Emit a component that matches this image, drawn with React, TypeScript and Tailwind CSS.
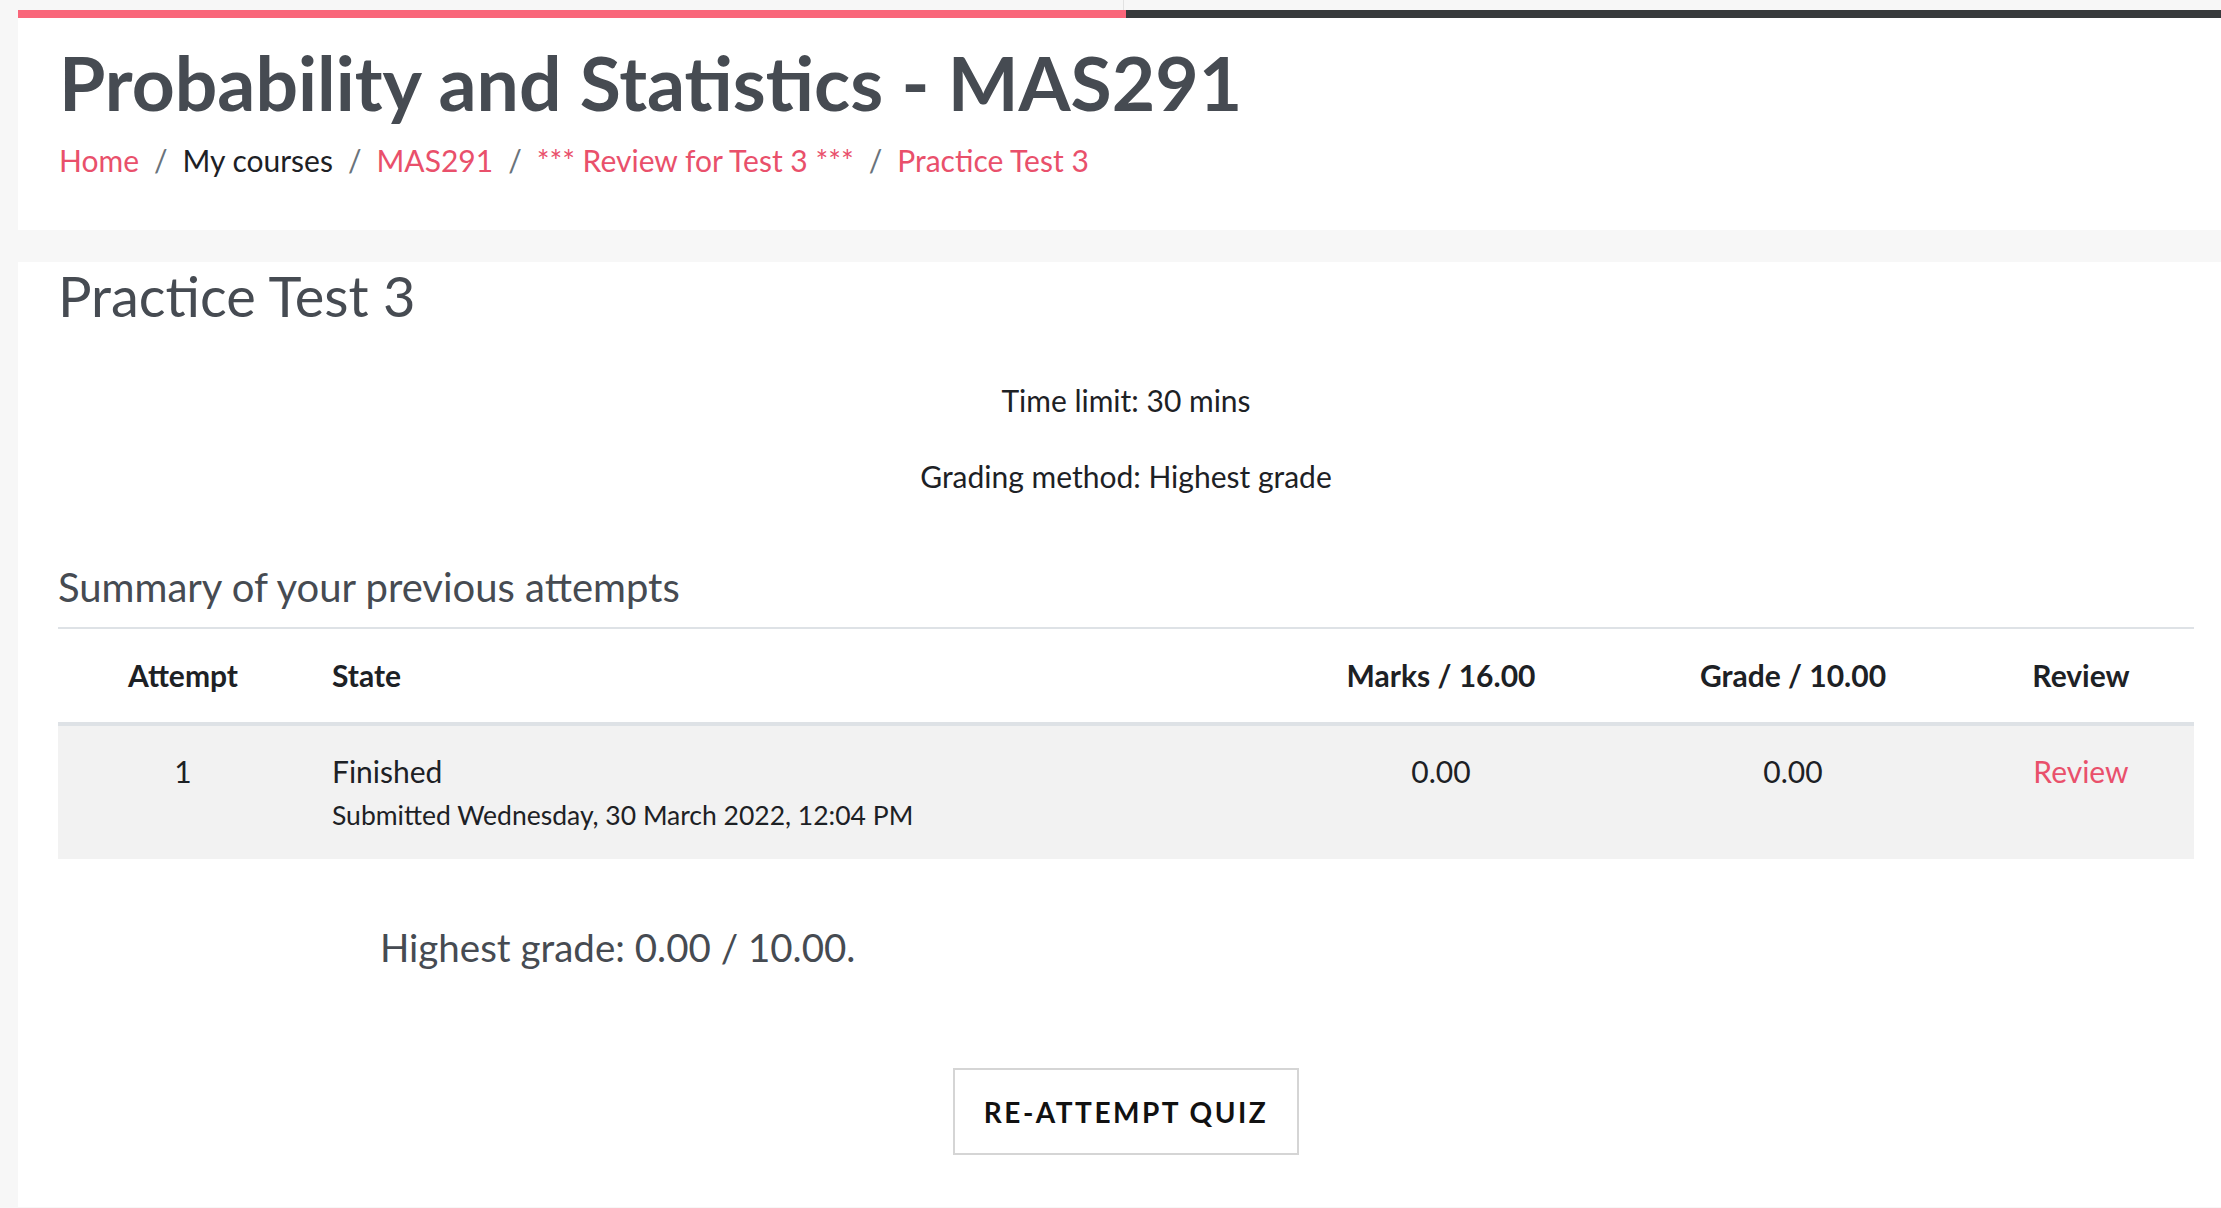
const crumbs = [
  { label: 'Home', link: true },
  { label: 'My courses', link: false },
  { label: 'MAS291', link: true },
  { label: '*** Review for Test 3 ***', link: true },
  { label: 'Practice Test 3', link: true },
]

const App = () => {
  return (
    <div className="min-h-screen bg-[#f7f7f7] pl-[18px] font-['Lato',sans-serif] text-[#1d2125]">
      <div className="flex h-[10px]">
        <div className="w-[1106px] border-r border-[#e2e2e2]" />
      </div>

      <header className="bg-white pb-[47px]">
        <div className="flex h-[8px]">
          <div className="w-[1108px] bg-[#f9667a]" />
          <div className="flex-1 bg-[#373a3c]" />
        </div>
        <h1 className="mt-[19px] pl-[41px] text-[75px] font-bold leading-[90px] text-[#464b52]">
          Probability and Statistics - MAS291
        </h1>
        <nav className="mt-[11px] pl-[41px] text-[30px] leading-[45px]">
          <ol className="flex">
            {crumbs.map((c, i) => (
              <li key={c.label} className="flex">
                {i > 0 && <span className="px-[15px] text-[#6a737b]">/</span>}
                <span className={c.link ? 'text-[#e9506b]' : 'text-[#1d2125]'}>{c.label}</span>
              </li>
            ))}
          </ol>
        </nav>
      </header>

      <main className="mt-[33px] min-h-[945px] bg-white pl-[40px] pr-[27px] pb-[40px]">
        <h2 className="-mt-[1px] text-[56px] leading-[68px] text-[#464b52]">Practice Test 3</h2>

        <div className="text-center text-[30px] leading-[45px]">
          <p className="mt-[48px]">Time limit: 30 mins</p>
          <p className="mt-[31px]">Grading method: Highest grade</p>
        </div>

        <h3 className="mt-[66px] text-[40px] leading-[45px] text-[#464b52]">
          Summary of your previous attempts
        </h3>

        <table className="mt-[17px] w-full table-fixed border-t-2 border-[#dee2e6] text-[30px] leading-[45px]">
          <thead>
            <tr className="border-b-4 border-[#dee2e6]">
              <th className="w-[250px] px-[24px] py-[24px] text-center font-bold">Attempt</th>
              <th className="w-[956px] px-[24px] py-[24px] text-left font-bold">State</th>
              <th className="w-[354px] px-[24px] py-[24px] text-center font-bold">Marks / 16.00</th>
              <th className="w-[350px] px-[24px] py-[24px] text-center font-bold">Grade / 10.00</th>
              <th className="w-[226px] px-[24px] py-[24px] text-center font-bold">Review</th>
            </tr>
          </thead>
          <tbody>
            <tr className="bg-[#f2f2f2] align-top">
              <td className="px-[24px] pt-[23px] pb-[26px] text-center">1</td>
              <td className="px-[24px] pt-[23px] pb-[26px]">
                Finished
                <div className="mt-[3px] text-[26.5px] leading-[36px]">
                  Submitted Wednesday, 30 March 2022, 12:04 PM
                </div>
              </td>
              <td className="px-[24px] pt-[23px] pb-[26px] text-center">0.00</td>
              <td className="px-[24px] pt-[23px] pb-[26px] text-center">0.00</td>
              <td className="px-[24px] pt-[23px] pb-[26px] text-center">
                <a className="text-[#e9506b]">Review</a>
              </td>
            </tr>
          </tbody>
        </table>

        <h4 className="mt-[66px] pl-[322px] text-[38.5px] leading-[45px] text-[#464b52]">
          Highest grade: 0.00 / 10.00.
        </h4>

        <div className="mt-[98px] flex justify-center">
          <button className="h-[87px] w-[346px] border-2 border-[#d5d5d5] bg-white text-[28px] font-bold uppercase tracking-[2.5px] text-[#111]">
            Re-attempt quiz
          </button>
        </div>
      </main>
    </div>
  )
}

export default App
